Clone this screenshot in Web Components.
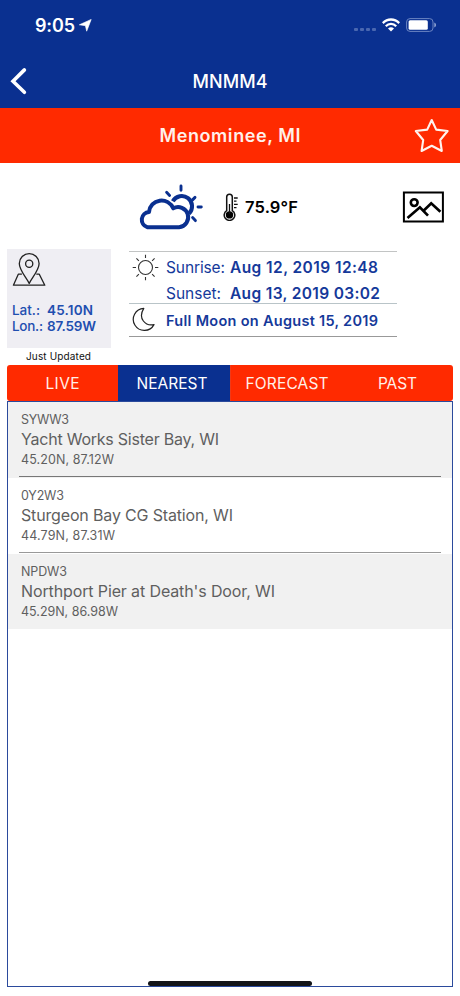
<!DOCTYPE html>
<html lang="en"><head><meta charset="utf-8"><title>MNMM4</title>
<style>
html,body{margin:0;height:100%;background:#fff}
body{font-family:Inter,"Liberation Sans",sans-serif;overflow:hidden}
</style></head><body>
<station-app></station-app>
<script>
const define=(name,html,after)=>{
  const t=document.createElement('template');t.innerHTML=html;
  customElements.define(name,class extends HTMLElement{
    constructor(){super();this.attachShadow({mode:'open'}).append(t.content.cloneNode(true));}
    connectedCallback(){if(after)after(this,this.shadowRoot);}
  });
};

/* A single line of text tracked so that it fills the width in its "w" attribute. */
define('tracked-text',`<style>
:host{display:block;white-space:pre;flex:none;line-height:1.2}
span{display:inline-block}
</style><span><slot></slot></span>`,(el,root)=>{
  const s=root.querySelector('span');
  const w=+el.getAttribute('w'),n=el.textContent.length;
  el.style.fontSize=el.getAttribute('size')+'px';
  el.style.width=w+'px';
  const natural=s.getBoundingClientRect().width;
  if(natural)s.style.letterSpacing=((w-natural)/(n-1)).toFixed(3)+'px';
});

define('status-bar',`<style>
:host{display:flex;height:50px;box-sizing:border-box;padding:0 23px 0 35px;align-items:center;color:#fff;font-weight:600}
tracked-text{margin-top:2px}
.arrow{margin-left:4px}
.dots{margin-left:auto;margin-right:6px;display:flex;gap:2px;padding-top:9px}
i{width:4px;height:3.5px;border-radius:1px;background:#4a67b0}
svg{display:block}
.wifi{margin-right:6px}
</style>
<tracked-text size="18" w="40">9:05</tracked-text>
<svg class="arrow" width="13" height="13" viewBox="0 0 13 13"><path d="M12.2.4 7.7 12.2 6.4 6.7.3 5.8Z" fill="#fff" stroke="#fff" stroke-width=".6" stroke-linejoin="round"/></svg>
<div class="dots"><i></i><i></i><i></i><i></i></div>
<svg class="wifi" width="18" height="14" viewBox="0 0 18 14"><g fill="none" stroke="#fff" stroke-width="2.3"><path d="M.8 5.1C5.4.3 12.6.3 17.2 5.1"/><path d="M3.8 8.2C6.7 5.2 11.3 5.2 14.2 8.2"/></g><path d="M6 10.4Q9 7.9 12 10.4L9 13.5Z" fill="#fff"/></svg>
<svg width="31" height="14" viewBox="0 0 31 14"><rect x=".6" y=".6" width="26.4" height="12.8" rx="3.4" fill="none" stroke="#6c85c2"/><rect x="2.6" y="2.3" width="19.2" height="9.4" rx="1.5" fill="#fff"/><path d="M28.3 4.5q1.8 .8 1.8 2.5t-1.8 2.5z" fill="#8ea2d2"/></svg>`);

define('nav-bar',`<style>
:host{display:grid;grid-template-columns:40px 1fr 40px;height:58px;align-items:center;justify-items:center;color:#fff;font-weight:550}
svg{justify-self:start;margin-left:10px;margin-top:4px}
tracked-text{margin-top:6px}
</style>
<svg width="18" height="28" viewBox="0 0 18 28"><path d="M14.4 2.9 3 14.2 14.4 25.3" fill="none" stroke="#fff" stroke-width="3.6" stroke-linecap="round"/></svg>
<tracked-text size="18" w="75">MNMM4</tracked-text>`);

define('place-bar',`<style>
:host{display:grid;grid-template-columns:50px 1fr 50px;height:55px;background:#ff2a00;align-items:center;justify-items:center;color:#fff0ea;font-weight:600}
svg{margin-right:8px}
</style><span></span>
<tracked-text size="18" w="141">Menominee, MI</tracked-text>
<svg width="36" height="35" viewBox="0 0 36 35"><path d="M18.7 2 23.2 11.6 34.6 13 27.2 22 28.8 33 18.7 27.8 8.6 33 10.2 22 2.8 13 14.2 11.6Z" fill="none" stroke="#fff3ee" stroke-width="2.1" stroke-linejoin="round"/></svg>`);

define('weather-summary',`<style>
:host{display:flex;height:86px;padding-left:138px;padding-right:15px;align-items:center;box-sizing:border-box;color:#000;font-weight:600}
.thermo{margin-left:18px;margin-right:5px}
.pic{margin-left:auto}
tracked-text{margin-top:3px}
svg{margin-top:2px}
</style>
<svg width="67" height="48" viewBox="0 0 67 48"><g fill="none" stroke="#0a3090" stroke-width="4" stroke-linejoin="round"><path d="M10.2 44.2H42A10.1 10.1 0 1 0 36.2 25.3A12.6 12.6 0 0 0 12 29A7.8 7.8 0 0 0 10.2 44.2Z" transform="translate(-1 0)"/><path d="M34.8 18.2A10.3 10.3 0 1 1 51 30.6"/></g><g stroke="#0a3090" stroke-width="2.9" stroke-linecap="round"><path d="M43 3V7.3M57 14.4 54.8 16.6M28.6 9.2 31.6 12.4M60 24H63.3M54.6 34.6 57.4 37.6"/></g></svg>
<svg class="thermo" width="17" height="28" viewBox="0 0 17 28"><path d="M3.7 17.6V4A2.8 2.8 0 0 1 9.3 4V17.6A5.3 5.3 0 1 1 3.7 17.6Z" fill="#fff" stroke="#111" stroke-width="1.5"/><circle cx="6.5" cy="21.9" r="3.7"/><path d="M6.5 21V11M11 5H14.7M11 8.2H13.5M11 11.4H14.7M11 14.6H13.5" fill="none" stroke="#111" stroke-width="1.3"/></svg>
<tracked-text size="16.5" w="53">75.9°F</tracked-text>
<svg class="pic" width="43" height="32" viewBox="0 0 43 32"><rect x="1.9" y="1.5" width="39" height="29" fill="none" stroke="#000" stroke-width="2"/><circle cx="12.2" cy="11.6" r="3.4" fill="none" stroke="#000" stroke-width="2.6"/><path d="M5.5 27 17.9 16.3 26 24.6M21.3 20 29.2 12.3 38.4 20.7" fill="none" stroke="#000" stroke-width="2.7"/></svg>`);

define('location-card',`<style>
:host{display:flex;flex-direction:column;width:104px;color:#1f4fb0}
.box{background:#efeef3;height:99px;box-sizing:border-box;padding:3px 0 0 5px}
svg{display:block;margin-bottom:14px}
.row{display:flex;height:16px;line-height:16px}
.row tracked-text:first-child{font-weight:500}
.row tracked-text+tracked-text{font-weight:600;margin-left:auto;margin-right:var(--r)}
.note{color:#111;padding:2px 0 0 19px}
</style><div class="box">
<svg width="36" height="36" viewBox="0 0 36 36"><g fill="none" stroke="#222" stroke-width="1.3" stroke-linejoin="round"><path d="M17.2 31.5C14.3 25.5 7.3 18.2 7.3 11.5A9.9 9.9 0 0 1 27.1 11.5C27.1 18.2 20.1 25.5 17.2 31.5Z"/><circle cx="17.2" cy="11.8" r="3.6"/><path d="M9.9 22.2H6.3L1.4 33.2H32.8L27.3 22.2H24.3"/></g></svg>
<div class="row" style="--r:18px"><tracked-text size="13.5" w="28">Lat.:</tracked-text><tracked-text size="13.5" w="46">45.10N</tracked-text></div>
<div class="row" style="--r:15px"><tracked-text size="13.5" w="31">Lon.:</tracked-text><tracked-text size="13.5" w="49">87.59W</tracked-text></div>
</div><div class="note"><tracked-text size="10" w="65">Just Updated</tracked-text></div>`);

define('almanac-card',`<style>
:host{display:block;width:268px;margin-top:2px;color:#15399a;font-weight:600}
.sun,.moon{display:grid;grid-template-columns:37px 1fr;border-top:1px solid #c2c4c4}
.sun{height:52px;box-sizing:border-box}
.moon{height:34px;box-sizing:border-box;border-bottom:1px solid #999;border-top-color:#b9c4c8;align-items:center}
.moon tracked-text{margin-top:2px}
svg{display:block;margin-left:2px}
.moon svg{margin-top:-2px}
.sun svg{margin-top:1px}
.line{display:flex;height:26px;align-items:center}
.line:first-child{height:32px}
.line+.line{height:20px}
.line tracked-text:first-child{font-weight:400}
.line tracked-text+tracked-text{margin-left:auto;margin-right:var(--r)}
</style>
<div class="sun"><svg width="30" height="30" viewBox="0 0 30 30"><g fill="none" stroke="#333" stroke-width="1.1"><circle cx="14.5" cy="14.5" r="7"/><path d="M14.5 1.7V5M14.5 24V27.3M1.7 14.5H5M24 14.5H27.3M5.4 5.4 7.9 7.9M21.1 21.1 23.6 23.6M23.6 5.4 21.1 7.9M7.9 21.1 5.4 23.6"/></g></svg>
<div><div class="line" style="--r:19px"><tracked-text size="15.5" w="59">Sunrise:</tracked-text><tracked-text size="15.5" w="148">Aug 12, 2019 12:48</tracked-text></div>
<div class="line" style="--r:17px"><tracked-text size="15.5" w="55">Sunset:</tracked-text><tracked-text size="15.5" w="150">Aug 13, 2019 03:02</tracked-text></div></div></div>
<div class="moon"><svg width="28" height="28" viewBox="0 0 28 28"><path d="M12.8 3.4A11 11 0 1 0 23 19.6C14.5 21.5 6.5 13.5 12.8 3.4Z" fill="none" stroke="#222" stroke-width="1.2" stroke-linejoin="round"/></svg><tracked-text size="14.5" w="212">Full Moon on August 15, 2019</tracked-text></div>`);

define('tab-strip',`<style>
:host{display:grid;grid-template-columns:111px 113px 112px 110px;height:36px;border-radius:3px;overflow:hidden;background:#ff2a00;color:#fff0e8}
div{display:flex;align-items:center;justify-content:center;padding:2px 1px 0 0;box-sizing:border-box}
.on{background:#0a3090;color:#fff}
div:nth-child(2){padding-right:0}
div:nth-child(3){border-right:1px solid #f13a18;padding-right:4px}
div:nth-child(4){padding-right:0}
</style>
<div><tracked-text size="15.5" w="34">LIVE</tracked-text></div><div class="on"><tracked-text size="15.5" w="71">NEAREST</tracked-text></div><div><tracked-text size="15.5" w="83">FORECAST</tracked-text></div><div><tracked-text size="15.5" w="39">PAST</tracked-text></div>`);

define('station-row',`<style>
:host{display:block;height:76px;box-sizing:border-box;padding:9px 0 0 13px;color:#5f5f5f;position:relative}
:host([shaded]){background:#f1f1f1}
:host(:last-child){height:75px}
:host(:not(:last-child))::after{content:"";position:absolute;left:11px;right:11px;bottom:1px;height:1px;background:#777}
:host(:nth-child(2))::after{background:#999}
div{display:flex;align-items:center;height:17px}
div.name{height:23px}
</style><div><slot name="code"></slot></div><div class="name"><slot name="name"></slot></div><div><slot name="pos"></slot></div>`);

define('station-list',`<style>
:host{display:block;box-sizing:border-box;height:586px;border:1px solid #2b4a9c}
</style><slot></slot>`);

define('home-indicator',`<style>:host{display:block;position:absolute;left:148px;top:981px;width:164px;height:5px;border-radius:3px;background:#131519}</style>`);

define('station-app',`<style>
:host{display:block;position:relative;width:460px;height:996px;background:#fff}
header{background:#0a3090}
.info{display:flex;gap:18px;padding-left:7px;height:116px}
main{padding:0 7px}
</style>
<header><status-bar></status-bar><nav-bar></nav-bar></header>
<place-bar></place-bar><weather-summary></weather-summary>
<div class="info"><location-card></location-card><almanac-card></almanac-card></div>
<main><tab-strip></tab-strip><station-list>
<station-row shaded><tracked-text slot="code" size="12.5" w="48">SYWW3</tracked-text><tracked-text slot="name" size="16" w="198">Yacht Works Sister Bay, WI</tracked-text><tracked-text slot="pos" size="12.5" w="93">45.20N, 87.12W</tracked-text></station-row>
<station-row><tracked-text slot="code" size="12.5" w="43">0Y2W3</tracked-text><tracked-text slot="name" size="16" w="212">Sturgeon Bay CG Station, WI</tracked-text><tracked-text slot="pos" size="12.5" w="94">44.79N, 87.31W</tracked-text></station-row>
<station-row shaded><tracked-text slot="code" size="12.5" w="46">NPDW3</tracked-text><tracked-text slot="name" size="16" w="254">Northport Pier at Death's Door, WI</tracked-text><tracked-text slot="pos" size="12.5" w="97">45.29N, 86.98W</tracked-text></station-row>
</station-list></main><home-indicator></home-indicator>`);
</script></body></html>
